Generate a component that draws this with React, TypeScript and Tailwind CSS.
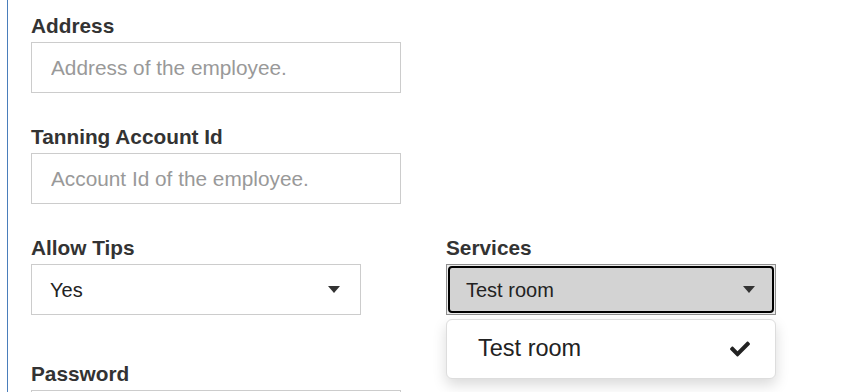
import { FaCheck } from "react-icons/fa";

function Caret() {
  return (
    <svg width="12" height="7" viewBox="0 0 12 7" className="shrink-0">
      <path d="M0 0h12L6 7z" fill="#333" />
    </svg>
  );
}

function TextField({ label, placeholder }: { label: string; placeholder: string }) {
  return (
    <div className="mb-8">
      <label className="mb-1 block text-[20.8px] font-bold leading-6 text-[#333]">{label}</label>
      <input
        placeholder={placeholder}
        className="block h-[51px] w-[370px] border border-[#cccccc] bg-white pl-[19px] text-[20.8px] text-[#333] outline-none placeholder:text-[#999]"
      />
    </div>
  );
}

export default function App() {
  return (
    <div className="min-h-screen bg-white pl-[7px] font-[family-name:Liberation_Sans,Arial,sans-serif]">
      <div className="min-h-[392px] border-l border-[#4a7ebb] pl-[23px] pt-[14px]">
        <TextField label="Address" placeholder="Address of the employee." />
        <TextField label="Tanning Account Id" placeholder="Account Id of the employee." />

        <div className="mb-[47px] grid grid-cols-[415px_415px]">
          <div>
            <label className="mb-1 block text-[20.8px] font-bold leading-6 text-[#333]">Allow Tips</label>
            <div className="flex h-[51px] w-[330px] items-center justify-between border border-[#cccccc] bg-white pl-[18px] pr-[20px] text-[20px] text-[#222]">
              <span>Yes</span>
              <Caret />
            </div>
          </div>

          <div>
            <label className="mb-1 block text-[20.8px] font-bold leading-6 text-[#333]">Services</label>
            <div className="relative w-[330px]">
              <div className="h-[51px] border border-[#8f8f8f] bg-[#ececec] p-px">
                <div className="flex h-full items-center justify-between rounded-[4px] border-2 border-black bg-[#d3d3d3] pl-[16px] pr-[17px] text-[20px] text-[#222]">
                  <span>Test room</span>
                  <Caret />
                </div>
              </div>
              <div className="absolute left-0 top-[55px] flex h-[60px] w-[330px] items-center justify-between rounded-[6px] border border-[#dddddd] bg-white pl-[31px] pr-[24px] text-[23.5px] text-[#222] shadow-[0_6px_14px_rgba(0,0,0,0.15)]">
                <span>Test room</span>
                <FaCheck className="h-[20px] w-[22px] text-[#222]" />
              </div>
            </div>
          </div>
        </div>

        <div>
          <label className="mb-1 block text-[20.8px] font-bold leading-6 text-[#333]">Password</label>
          <input
            type="password"
            className="block h-[51px] w-[370px] border border-[#cccccc] bg-white pl-[19px] text-[20.8px] outline-none"
          />
        </div>
      </div>
    </div>
  );
}
